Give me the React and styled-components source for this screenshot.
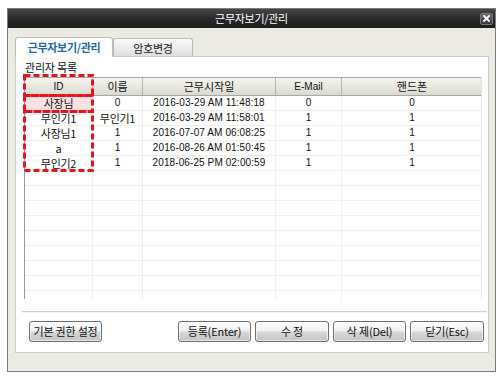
import React from 'react';
import styled, { createGlobalStyle } from 'styled-components';

const GlobalStyle = createGlobalStyle`
  html, body {
    margin: 0;
    padding: 0;
    background: #ffffff;
  }
  body {
    font-family: "Noto Sans CJK KR", "Liberation Sans", sans-serif;
    font-size: 11px;
    color: #111;
  }
`;

const columns = [
  { key: 'id', label: 'ID', width: 68 },
  { key: 'name', label: '이름', width: 50 },
  { key: 'start', label: '근무시작일', width: 133 },
  { key: 'mail', label: 'E-Mail', width: 66 },
  { key: 'phone', label: '핸드폰', width: 140 },
];

const rows = [
  { id: '사장님', name: '0', start: '2016-03-29 AM 11:48:18', mail: '0', phone: '0' },
  { id: '무인기1', name: '무인기1', start: '2016-03-29 AM 11:58:01', mail: '1', phone: '1' },
  { id: '사장님1', name: '1', start: '2016-07-07 AM 06:08:25', mail: '1', phone: '1' },
  { id: 'a', name: '1', start: '2016-08-26 AM 01:50:45', mail: '1', phone: '1' },
  { id: '무인기2', name: '1', start: '2018-06-25 PM 02:00:59', mail: '1', phone: '1' },
];

const EMPTY_ROWS = 10;
const gridCols = columns.map((c) => `${c.width}px`).join(' ');

const Window = styled.div`
  margin: 8px 0 0 7px;
  width: 487px;
  height: 362px;
  border: 1px solid #7c7c7c;
  background: #ebebe4;
  display: flex;
  flex-direction: column;
`;

const TitleBar = styled.div`
  height: 19px;
  display: grid;
  grid-template-columns: 1fr auto 1fr;
  align-items: center;
  background: linear-gradient(#474747, #2a2a2a 50%, #1c1c1c);
  color: #fff;
`;

const Title = styled.div`
  grid-column: 2;
  font-size: 11px;
  line-height: 19px;
  letter-spacing: -0.3px;
`;

const CloseBtn = styled.div`
  grid-column: 3;
  justify-self: end;
  margin-right: 2px;
  width: 11px;
  height: 10px;
  border: 1px solid #777;
  border-radius: 2px;
  background: linear-gradient(#6a6a6a, #3a3a3a);
  display: flex;
  align-items: center;
  justify-content: center;
`;

const Body = styled.div`
  padding: 9px 0 0 7px;
`;

const Tabs = styled.div`
  display: flex;
  height: 19px;
`;

const Tab = styled.div`
  width: ${(p) => p.$width}px;
  height: ${(p) => (p.$active ? 20 : 18)}px;
  margin-top: ${(p) => (p.$active ? 0 : 1)}px;
  box-sizing: border-box;
  border: 1px solid #b7bcc2;
  border-bottom: none;
  border-radius: 3px 3px 0 0;
  background: ${(p) => (p.$active ? '#ffffff' : 'linear-gradient(#fafafa, #dedede)')};
  color: ${(p) => (p.$active ? '#1f6c9e' : '#222')};
  font-weight: ${(p) => (p.$active ? 700 : 400)};
  font-size: 11px;
  line-height: 18px;
  text-align: center;
  letter-spacing: -0.3px;
  position: relative;
  z-index: ${(p) => (p.$active ? 1 : 0)};
`;

const Panel = styled.div`
  width: 474px;
  height: 297px;
  box-sizing: border-box;
  border: 1px solid #c6cdd3;
  background: #fff;
  display: flex;
  flex-direction: column;
`;

const SectionLabel = styled.div`
  margin: 4px 0 0 9px;
  line-height: 13px;
  font-size: 11px;
  letter-spacing: -0.2px;
`;

const TableWrap = styled.div`
  position: relative;
  margin: 3px 0 0 8px;
  width: 458px;
  height: 222px;
  box-sizing: border-box;
  border-left: 1px solid #9a9a9a;
  border-right: 1px solid #e3e3e3;
`;

const TableClip = styled.div`
  height: 100%;
  overflow: hidden;
`;

const HeaderRow = styled.div`
  display: grid;
  grid-template-columns: ${gridCols};
  height: 19px;
  box-sizing: border-box;
  border-top: 1px solid #a9a9a2;
  border-bottom: 1px solid #a9a9a2;
  background: linear-gradient(#f5f5f0, #e6e6df 60%, #d9d9d2);
`;

const HeadCell = styled.div`
  border-right: 1px solid #b4b4ac;
  text-align: center;
  line-height: 17px;
  font-size: ${(p) => (p.$latin ? '10px' : '11px')};
  font-family: ${(p) => (p.$latin ? '"Liberation Sans", sans-serif' : 'inherit')};
  &:last-child {
    border-right: none;
  }
`;

const Row = styled.div`
  display: grid;
  grid-template-columns: ${gridCols};
  height: 15px;
  box-sizing: border-box;
  border-bottom: 1px solid #efefef;
`;

const Cell = styled.div`
  border-right: 1px solid #efefef;
  text-align: center;
  line-height: 14px;
  white-space: nowrap;
  overflow: hidden;
  background: ${(p) => (p.$hl ? '#fbe1e1' : 'transparent')};
  font-family: ${(p) => (p.$mono ? '"Liberation Sans", sans-serif' : 'inherit')};
  font-size: ${(p) => (p.$mono ? '10px' : '11px')};
  letter-spacing: ${(p) => (p.$mono ? '0.1px' : '-0.3px')};
  &:last-child {
    border-right: none;
  }
`;

const Marks = styled.svg`
  position: absolute;
  left: -2px;
  top: -3px;
  pointer-events: none;
  overflow: visible;
`;

const Divider = styled.div`
  margin: 12px 1px 0 6px;
  height: 1px;
  background: #cfcfcf;
  border-bottom: 1px solid #f4f4f4;
`;

const ButtonBar = styled.div`
  display: flex;
  align-items: center;
  gap: 4px;
  margin-top: 8px;
  padding: 0 4px 0 13px;
`;

const Spacer = styled.div`
  flex: 1;
`;

const Button = styled.div`
  width: ${(p) => p.$width}px;
  height: 21px;
  box-sizing: border-box;
  border: 1px solid #6f6f6f;
  border-radius: 3px;
  background: linear-gradient(#ffffff, #f0f0f0 45%, #d6d6d6 55%, #c4c4c4);
  box-shadow: inset 0 0 0 1px rgba(255, 255, 255, 0.6);
  text-align: center;
  line-height: 19px;
  font-size: 11px;
  letter-spacing: -0.2px;
  white-space: nowrap;
`;

export default function App() {
  const dash = { stroke: '#e8141c', strokeWidth: 3, strokeDasharray: '6 3', fill: 'none' };
  return (
    <>
      <GlobalStyle />
      <Window>
        <TitleBar>
          <Title>근무자보기/관리</Title>
          <CloseBtn>
            <svg width="7" height="7" viewBox="0 0 7 7">
              <path d="M1 1 L6 6 M6 1 L1 6" stroke="#fff" strokeWidth="1.8" strokeLinecap="square" />
            </svg>
          </CloseBtn>
        </TitleBar>
        <Body>
          <Tabs>
            <Tab $active $width={98}>근무자보기/관리</Tab>
            <Tab $width={80}>암호변경</Tab>
          </Tabs>
          <Panel>
            <SectionLabel>관리자 목록</SectionLabel>
            <TableWrap>
              <TableClip>
                <HeaderRow>
                  {columns.map((c) => (
                    <HeadCell key={c.key} $latin={c.key === 'id' || c.key === 'mail'}>
                      {c.label}
                    </HeadCell>
                  ))}
                </HeaderRow>
                {rows.map((r, i) => (
                  <Row key={i}>
                    {columns.map((c) => (
                      <Cell
                        key={c.key}
                        $hl={i === 0 && c.key === 'id'}
                        $mono={c.key === 'start' || (c.key !== 'id' && r[c.key].length === 1)}
                      >
                        {r[c.key]}
                      </Cell>
                    ))}
                  </Row>
                ))}
                {Array.from({ length: EMPTY_ROWS }).map((_, i) => (
                  <Row key={`e${i}`}>
                    {columns.map((c) => (
                      <Cell key={c.key} />
                    ))}
                  </Row>
                ))}
              </TableClip>
              <Marks width="72" height="100">
                <rect x="1.5" y="1.5" width="68" height="20" {...dash} />
                <rect x="1.5" y="21.5" width="68" height="16" {...dash} />
                <rect x="1.5" y="37.5" width="68" height="59" {...dash} />
              </Marks>
            </TableWrap>
            <Divider />
            <ButtonBar>
              <Button $width={73}>기본 권한 설정</Button>
              <Spacer />
              <Button $width={73}>등록(Enter)</Button>
              <Button $width={74}>수 정</Button>
              <Button $width={73}>삭 제(Del)</Button>
              <Button $width={74}>닫기(Esc)</Button>
            </ButtonBar>
          </Panel>
        </Body>
      </Window>
    </>
  );
}
